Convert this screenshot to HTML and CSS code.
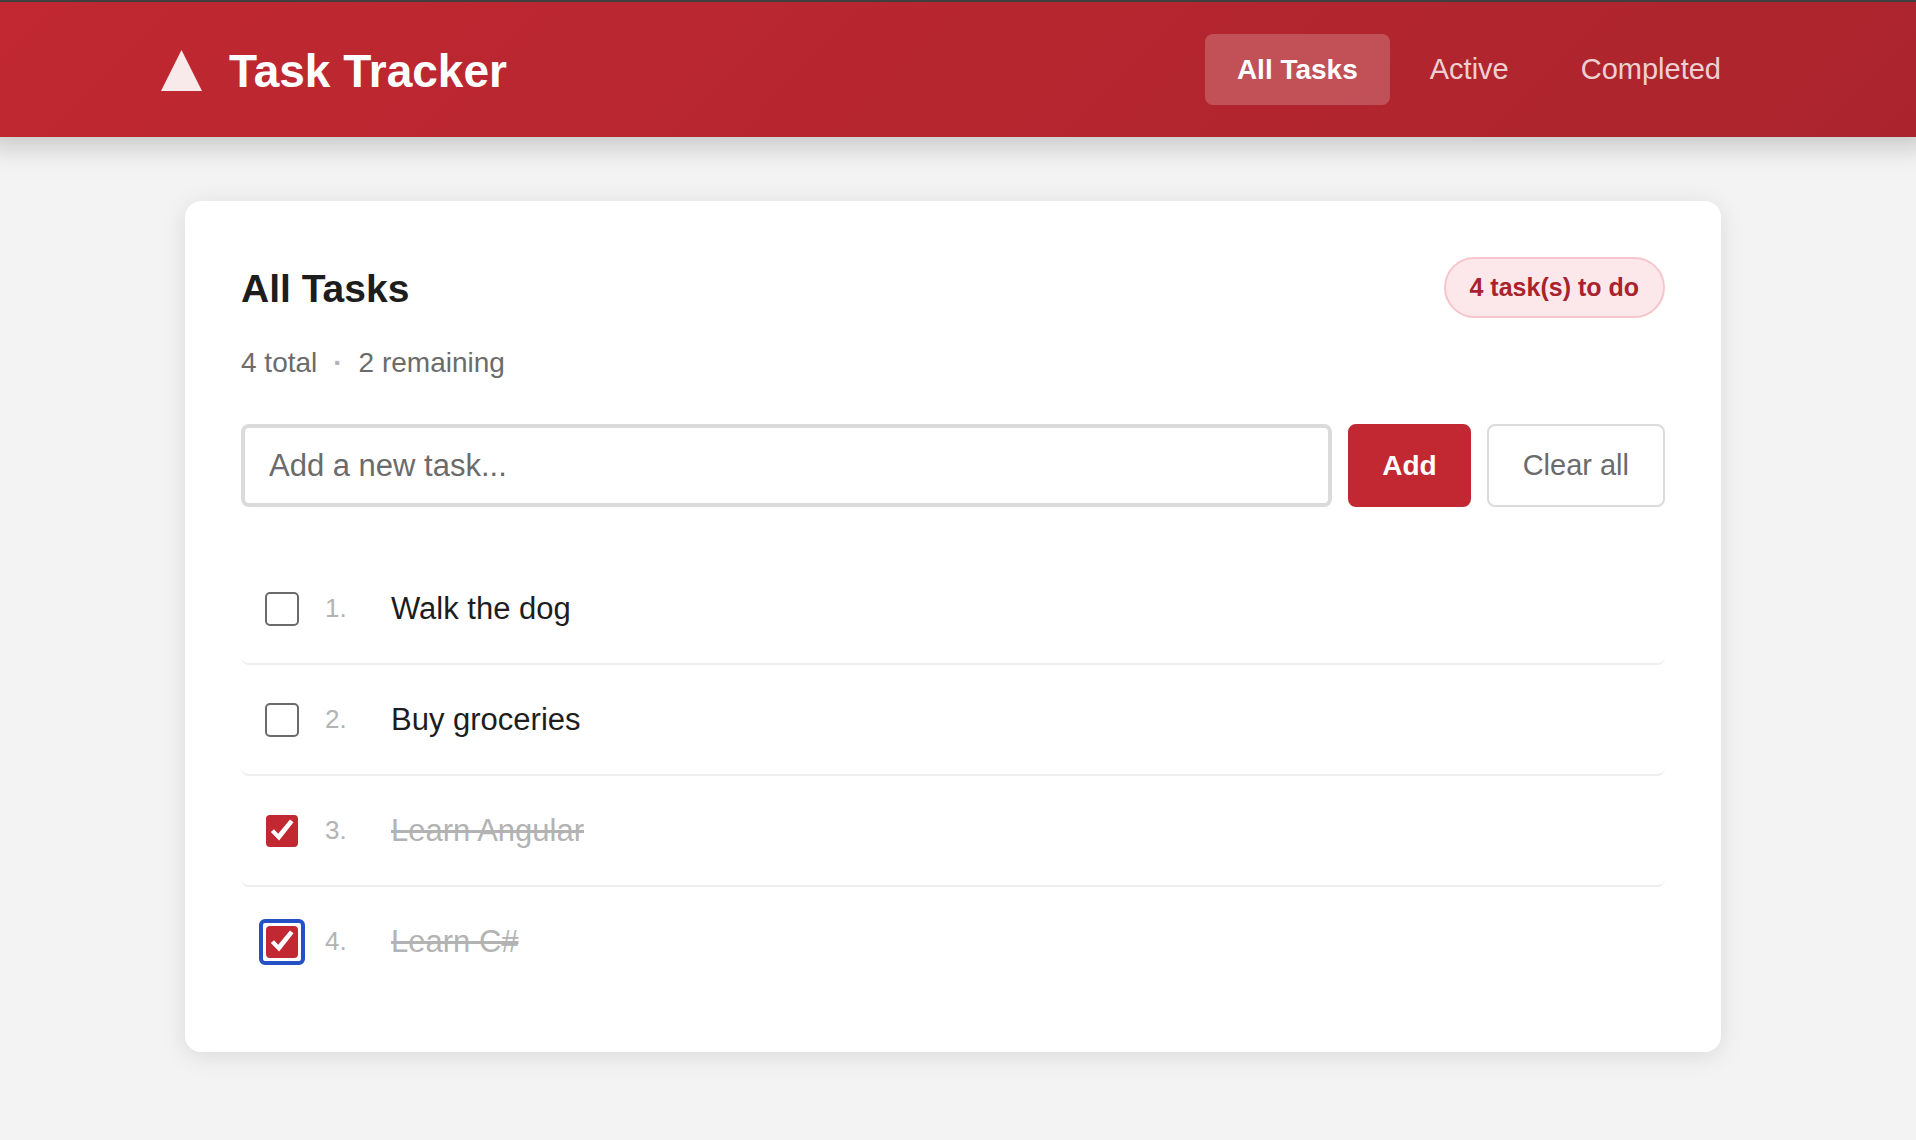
FILE: index.html
```
<!DOCTYPE html>
<html lang="en">
<head>
    <meta charset="UTF-8">
    <meta name="viewport" content="width=device-width, initial-scale=1.0">
    <title>Task Tracker</title>
    <link rel="stylesheet" href="styles.css">
</head>
<body>
    <header class="header">
        <div class="container header-inner">
            <div class="logo">
                <svg class="logo-icon" viewBox="0 0 41 41" aria-hidden="true">
                    <polygon points="20.5,0 41,41 0,41" fill="currentColor"/>
                </svg>
                <h1>Task Tracker</h1>
            </div>
            <nav class="nav">
                <a href="#" class="nav-link active">All Tasks</a>
                <a href="#" class="nav-link">Active</a>
                <a href="#" class="nav-link">Completed</a>
            </nav>
        </div>
    </header>

    <main class="page">
        <div class="container main">
            <section class="card">
                <div class="card-header">
                    <h2>All Tasks</h2>
                    <span class="badge">4 task(s) to do</span>
                </div>
                <p class="summary">
                    <span>4 total</span>
                    <span class="dot">·</span>
                    <span>2 remaining</span>
                </p>
                <form class="task-form">
                    <input type="text" class="task-input" placeholder="Add a new task..." aria-label="New task">
                    <button type="button" class="btn btn-primary">Add</button>
                    <button type="button" class="btn btn-outline">Clear all</button>
                </form>
                <ul class="task-list">
                    <li class="task">
                        <input type="checkbox" class="checkbox" id="task-1">
                        <span class="task-number">1.</span>
                        <label for="task-1">Walk the dog</label>
                    </li>
                    <li class="task">
                        <input type="checkbox" class="checkbox" id="task-2">
                        <span class="task-number">2.</span>
                        <label for="task-2">Buy groceries</label>
                    </li>
                    <li class="task done">
                        <input type="checkbox" class="checkbox" id="task-3" checked>
                        <span class="task-number">3.</span>
                        <label for="task-3">Learn Angular</label>
                    </li>
                    <li class="task done">
                        <input type="checkbox" class="checkbox focused" id="task-4" checked>
                        <span class="task-number">4.</span>
                        <label for="task-4">Learn C#</label>
                    </li>
                </ul>
            </section>
        </div>
    </main>
</body>
</html>
```
FILE: styles.css
```
* {
    box-sizing: border-box;
}
body {
    margin: 0;
    padding: 0;
    background-color: #f3f3f3;
    color: #1d1d1d;
    font-family: "Helvetica Neue", "Liberation Sans", Arial, sans-serif;
    font-size: 28px;
}
h1, h2, p, ul {
    margin: 0;
    padding: 0;
}
.container {
    width: 100%;
    max-width: 1600px;
    margin: 0 auto;
}

/* Header */
.header {
    padding: 32px 10px 32px 0;
    border-top: 2px solid #3f3f3f;
    background: linear-gradient(135deg, #c12831, #ab242d);
    box-shadow: 0 -4px 24px 14px rgba(0, 0, 0, 0.18);
}
.header-inner {
    display: flex;
    align-items: center;
    justify-content: space-between;
}
.logo {
    display: flex;
    align-items: center;
    gap: 27px;
    padding: 2px 0 0 8px;
    color: #fff;
}
.logo-icon {
    width: 41px;
    height: 41px;
    color: #f8e9ea;
}
.logo h1 {
    font-size: 46px;
    line-height: 52px;
}
.nav {
    display: flex;
    gap: 8px;
}
.nav-link {
    padding: 16px 32px;
    border-radius: 8px;
    color: rgba(255, 255, 255, 0.8);
    font-size: 29px;
    line-height: 39px;
    text-decoration: none;
}
.nav-link.active {
    background-color: rgba(255, 255, 255, 0.2);
    color: #fff;
    font-size: 28px;
    font-weight: bold;
}

/* Card */
.page {
    padding-right: 10px;
}
.main {
    padding: 64px 32px;
}
.card {
    padding: 56px;
    border-radius: 16px;
    background-color: #fff;
    box-shadow: 0 4px 24px rgba(0, 0, 0, 0.1);
}
.card-header {
    display: flex;
    align-items: center;
    justify-content: space-between;
}
.card-header h2 {
    padding-top: 2px;
    font-size: 39px;
    line-height: 48px;
}
.badge {
    padding: 12px 24px;
    border: 2px solid #f5c6cb;
    border-radius: 40px;
    background-color: #fce8ea;
    color: #a8232d;
    font-size: 25px;
    font-weight: bold;
    line-height: 33px;
}
.summary {
    display: flex;
    gap: 16px;
    margin: 24px 0 40px;
    color: #6b6b6b;
    line-height: 42px;
}
.dot {
    color: #b3b3b3;
    font-weight: bold;
}

/* Form */
.task-form {
    display: flex;
    gap: 16px;
}
.task-input {
    flex: 1;
    min-width: 0;
    padding: 20px 24px;
    border: 4px solid #dbdbdb;
    border-radius: 8px;
    color: #1d1d1d;
    font-family: inherit;
    font-size: 31px;
    line-height: 35px;
}
.task-input::placeholder {
    color: #6b6b6b;
}
.btn {
    padding: 0 32px;
    border: 2px solid #c12832;
    border-radius: 8px;
    font-family: inherit;
    font-size: 28px;
    cursor: pointer;
}
.btn-primary {
    background-color: #c12832;
    color: #fff;
    font-weight: bold;
}
.btn-outline {
    padding: 0 34px;
    border-color: #dbdbdb;
    background-color: #fff;
    color: #6b6b6b;
    font-size: 29px;
}

/* Task list */
.task-list {
    margin-top: 47px;
    list-style: none;
}
.task {
    display: flex;
    align-items: center;
    gap: 24px;
    padding: 32px 24px;
    border-bottom: 2px solid #eee;
    border-radius: 8px;
    font-size: 31px;
    line-height: 45px;
}
.task:last-child {
    border-bottom: none;
}
.task-number {
    width: 42px;
    color: #b3b3b3;
    font-size: 26px;
}
.task.done label {
    color: #b3b3b3;
    text-decoration: line-through;
    text-decoration-thickness: 3px;
}
.checkbox {
    appearance: none;
    position: relative;
    width: 34px;
    height: 34px;
    margin: 0 2px 0 0;
    border: 2px solid #6b6b6b;
    border-radius: 5px;
    background-color: #fff;
}
.checkbox:checked {
    width: 32px;
    height: 32px;
    margin: 0 3px 0 1px;
    border: none;
    border-radius: 4px;
    background-color: #c12832;
}
.checkbox:checked::before {
    content: "";
    display: block;
    height: 100%;
    background-color: #fff;
    clip-path: polygon(15% 55%, 25% 46%, 38% 60%, 75% 16%, 86% 24%, 41% 81%);
}
/* focus ring */
.checkbox:focus-visible {
    outline: none;
}
.checkbox.focused::after,
.checkbox:focus-visible::after {
    content: "";
    position: absolute;
    inset: -7px;
    border: 4px solid #2452c4;
    border-radius: 6px;
}
```
